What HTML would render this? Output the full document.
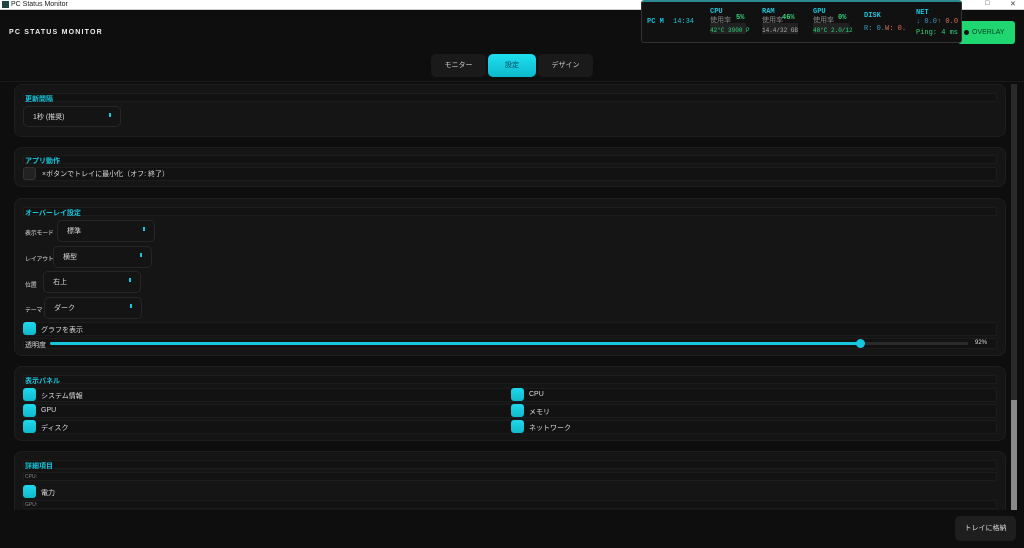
<!DOCTYPE html>
<html><head><meta charset="utf-8"><style>
*{box-sizing:border-box;margin:0;padding:0}
body{width:1024px;height:548px;background:#0e0e0e;font-family:"Liberation Sans","Noto Sans CJK JP",sans-serif;color:#ddd;position:relative;overflow:hidden;font-size:7px}
.a{position:absolute}
.card{position:absolute;left:14px;width:992px;background:#151515;border:1px solid #1e1e1e;border-radius:8px}
.lbl{position:absolute;left:25px;color:#16c6dc;font-size:7px;font-weight:bold}
.strip{position:absolute;background:#121212;border:1px solid #1c1c1c;border-radius:2px}
.dd{position:absolute;background:#141414;border:1px solid #262626;border-radius:5px;font-size:7px;color:#ddd;padding-left:9px;display:flex;align-items:center}
.dd:after{content:"";position:absolute;right:9px;top:6px;width:2px;height:4px;background:#16c6dc}
.rl{position:absolute;font-size:6px;color:#ddd;letter-spacing:-0.3px;white-space:nowrap}
.cb{position:absolute;width:13px;height:13px;border-radius:3px;background:linear-gradient(#20d8ec,#0fb8cc)}
.t{position:absolute;font-size:7px;color:#ddd}
.ov{font-family:"Liberation Mono","Noto Sans CJK JP",monospace;position:absolute;font-size:7px;font-weight:bold}
</style></head><body>
<div class="a" style="left:0;top:0;width:1024px;height:10px;background:#fff;border-bottom:1px solid #ccc"></div>
<div class="a" style="left:2px;top:1px;width:7px;height:7px;background:#244"></div>
<div class="a" style="left:11px;top:0;font-size:7px;color:#222;line-height:10px">PC Status Monitor</div>
<div class="a" style="left:985px;top:0;font-size:7px;color:#333">□</div>
<div class="a" style="left:1010px;top:0;font-size:7px;color:#333">✕</div>
<div class="a" style="left:9px;top:29px;font-size:7px;font-weight:bold;letter-spacing:1.2px;color:#eee">PC STATUS MONITOR</div>

<div class="a" style="left:958px;top:21px;width:57px;height:23px;background:#1fd670;border-radius:3px;color:#042;font-size:7px;display:flex;align-items:center;padding-left:6px"><span style="display:inline-block;width:5px;height:5px;border-radius:50%;background:#111;margin-right:3px"></span>OVERLAY</div>
<div class="a" style="left:641px;top:0;width:321px;height:43px;background:#111;border:1px solid #333;border-radius:3px;border-top:2px solid #2a8a90"></div>
<div class="ov" style="left:647px;top:18px;color:#16c6dc">PC M</div>
<div class="ov" style="left:673px;top:18px;color:#16c6dc;font-weight:normal">14:34</div>
<div class="ov" style="left:710px;top:8px;color:#16c6dc">CPU</div>
<div class="ov" style="left:710px;top:15px;color:#888;font-weight:normal">使用率</div>
<div class="ov" style="left:736px;top:14px;color:#2fd67a">5%</div>
<div class="a" style="left:710px;top:23px;width:36px;height:11px;background:#222"></div>
<div class="ov" style="left:710px;top:27px;color:#2fd67a;font-weight:normal;font-size:6px">42°C 3900 P</div>
<div class="ov" style="left:762px;top:8px;color:#16c6dc">RAM</div>
<div class="ov" style="left:762px;top:15px;color:#888;font-weight:normal">使用率</div>
<div class="ov" style="left:782px;top:14px;color:#2fd67a">46%</div>
<div class="a" style="left:762px;top:23px;width:36px;height:11px;background:#222"></div>
<div class="ov" style="left:762px;top:27px;color:#aaa;font-weight:normal;font-size:6px">14.4/32 GB</div>
<div class="ov" style="left:813px;top:8px;color:#16c6dc">GPU</div>
<div class="ov" style="left:813px;top:15px;color:#888;font-weight:normal">使用率</div>
<div class="ov" style="left:838px;top:14px;color:#2fd67a">0%</div>
<div class="a" style="left:813px;top:23px;width:36px;height:11px;background:#222"></div>
<div class="ov" style="left:813px;top:27px;color:#2fd67a;font-weight:normal;font-size:6px">48°C 2.0/12</div>
<div class="ov" style="left:864px;top:12px;color:#16c6dc">DISK</div>
<div class="ov" style="left:864px;top:25px;color:#3a9ac0;font-weight:normal">R: 0.<span style="color:#e07050">W: 0.</span></div>
<div class="ov" style="left:916px;top:9px;color:#16c6dc">NET</div>
<div class="ov" style="left:916px;top:18px;color:#3a9ac0;font-weight:normal">↓ 0.0<span style="color:#e07050">↑ 0.0</span></div>
<div class="ov" style="left:916px;top:29px;color:#2fd67a;font-weight:normal">Ping: 4 ms</div>

<div class="a" style="left:431px;top:54px;width:55px;height:23px;background:#1a1a1a;border-radius:5px;color:#ccc;font-size:7px;text-align:center;line-height:23px">モニター</div>
<div class="a" style="left:488px;top:54px;width:48px;height:23px;background:linear-gradient(#1ee0f0,#0cb8cc);border-radius:5px;color:#045;font-size:7px;text-align:center;line-height:23px">設定</div>
<div class="a" style="left:538px;top:54px;width:55px;height:23px;background:#1a1a1a;border-radius:5px;color:#ccc;font-size:7px;text-align:center;line-height:23px">デザイン</div>

<div class="a" style="left:0;top:81px;width:1024px;height:1px;background:#1a1a1a"></div>
<div class="a" style="left:1011px;top:84px;width:6px;height:426px;background:#2a2a2a"></div>
<div class="a" style="left:1011px;top:400px;width:6px;height:110px;background:#8a8a8a"></div>

<div class="card" style="top:84px;height:53px"></div>
<div class="strip" style="left:23px;top:93px;width:974px;height:9px"></div>
<div class="lbl" style="top:94px">更新間隔</div>
<div class="dd" style="left:23px;top:106px;width:98px;height:21px">1秒 (推奨)</div>

<div class="card" style="top:147px;height:40px"></div>
<div class="strip" style="left:23px;top:155px;width:974px;height:9px"></div>
<div class="lbl" style="top:156px">アプリ動作</div>
<div class="strip" style="left:23px;top:167px;width:974px;height:14px"></div>
<div class="a" style="left:23px;top:167px;width:13px;height:13px;border-radius:3px;background:#222;border:1px solid #333"></div>
<div class="t" style="left:42px;top:169px">×ボタンでトレイに最小化（オフ: 終了）</div>

<div class="card" style="top:198px;height:158px"></div>
<div class="strip" style="left:23px;top:207px;width:974px;height:9px"></div>
<div class="lbl" style="top:208px">オーバーレイ設定</div>
<div class="rl" style="left:25px;top:228px">表示モード</div>
<div class="dd" style="left:57px;top:220px;width:98px;height:22px">標準</div>
<div class="rl" style="left:25px;top:254px">レイアウト</div>
<div class="dd" style="left:53px;top:246px;width:99px;height:22px">横型</div>
<div class="rl" style="left:25px;top:280px">位置</div>
<div class="dd" style="left:43px;top:271px;width:98px;height:22px">右上</div>
<div class="rl" style="left:25px;top:305px">テーマ</div>
<div class="dd" style="left:44px;top:297px;width:98px;height:22px">ダーク</div>
<div class="strip" style="left:23px;top:322px;width:974px;height:14px"></div>
<div class="cb" style="left:23px;top:322px"></div>
<div class="t" style="left:41px;top:325px">グラフを表示</div>
<div class="strip" style="left:23px;top:338px;width:974px;height:11px"></div>
<div class="t" style="left:25px;top:340px">透明度</div>
<div class="a" style="left:50px;top:342px;width:810px;height:3px;background:#16c6dc;border-radius:2px"></div>
<div class="a" style="left:860px;top:342px;width:108px;height:3px;background:#2a2a2a"></div>
<div class="a" style="left:856px;top:339px;width:9px;height:9px;border-radius:50%;background:#16c6dc"></div>
<div class="t" style="left:975px;top:340px;font-size:6px">92%</div>

<div class="card" style="top:366px;height:75px"></div>
<div class="strip" style="left:23px;top:375px;width:974px;height:9px"></div>
<div class="lbl" style="top:376px">表示パネル</div>
<div class="strip" style="left:23px;top:388px;width:974px;height:14px"></div>
<div class="strip" style="left:23px;top:404px;width:974px;height:14px"></div>
<div class="strip" style="left:23px;top:420px;width:974px;height:14px"></div>
<div class="cb" style="left:23px;top:388px"></div><div class="t" style="left:41px;top:391px">システム情報</div>
<div class="cb" style="left:23px;top:404px"></div><div class="t" style="left:41px;top:407px">GPU</div>
<div class="cb" style="left:23px;top:420px"></div><div class="t" style="left:41px;top:423px">ディスク</div>
<div class="cb" style="left:511px;top:388px"></div><div class="t" style="left:529px;top:391px">CPU</div>
<div class="cb" style="left:511px;top:404px"></div><div class="t" style="left:529px;top:407px">メモリ</div>
<div class="cb" style="left:511px;top:420px"></div><div class="t" style="left:529px;top:423px">ネットワーク</div>

<div class="card" style="top:451px;height:70px"></div>
<div class="strip" style="left:23px;top:460px;width:974px;height:9px"></div>
<div class="lbl" style="top:461px">詳細項目</div>
<div class="strip" style="left:23px;top:472px;width:974px;height:9px"></div>
<div class="t" style="left:25px;top:474px;font-size:5px;color:#888">CPU:</div>
<div class="cb" style="left:23px;top:485px"></div><div class="t" style="left:41px;top:488px">電力</div>
<div class="strip" style="left:23px;top:500px;width:974px;height:9px"></div>
<div class="t" style="left:25px;top:502px;font-size:5px;color:#888">GPU:</div>
<div class="a" style="left:0;top:510px;width:1024px;height:38px;background:#0e0e0e"></div>

<div class="a" style="left:955px;top:516px;width:61px;height:25px;background:#1e1e1e;border-radius:5px;color:#ddd;font-size:7px;text-align:center;line-height:25px">トレイに格納</div>
</body></html>
